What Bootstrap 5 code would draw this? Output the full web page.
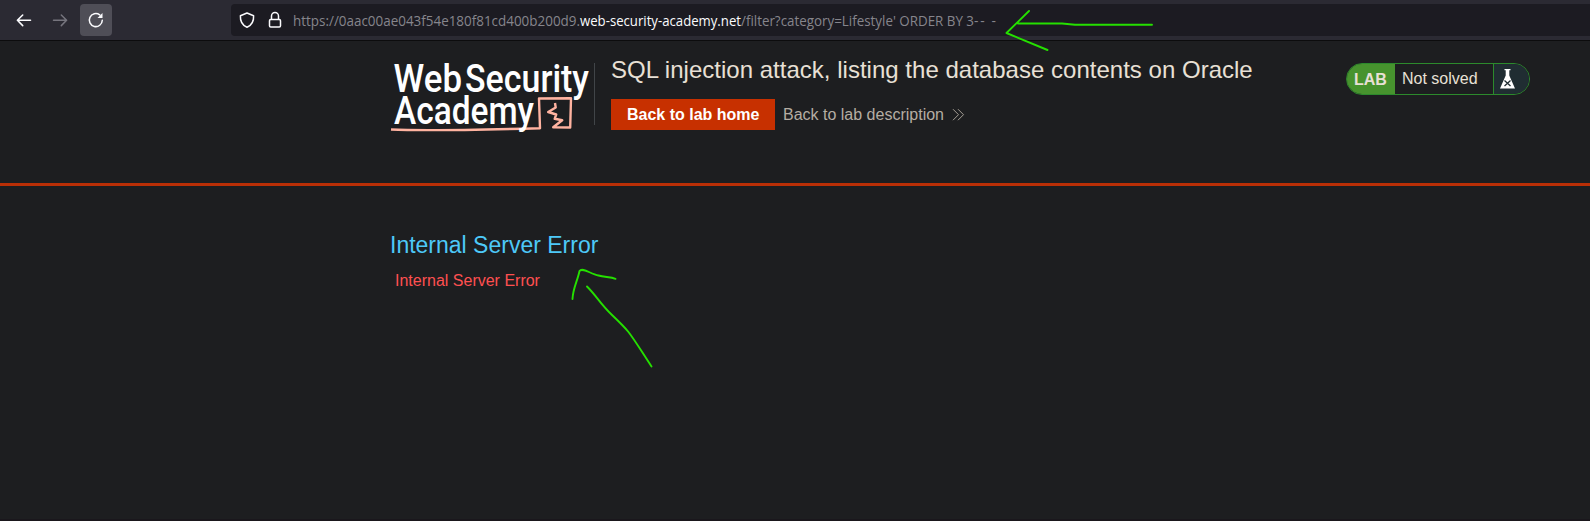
<!DOCTYPE html>
<html lang="en" data-bs-theme="dark">
<head>
<meta charset="utf-8">
<meta name="viewport" content="width=device-width, initial-scale=1">
<title>Internal Server Error</title>
<link href="https://cdn.jsdelivr.net/npm/bootstrap@5.3.0/dist/css/bootstrap.min.css" rel="stylesheet">
<style>
body{background:#1d1e20;font-family:"Liberation Sans",Arial,sans-serif;font-size:16px;height:521px;border-bottom:2px solid #1a171c;overflow:hidden}
svg{display:block;flex-shrink:0;overflow:visible}
.toolbar{height:41px;background:#2b2a33;border-bottom:1px solid #0c0c0d;padding:4px 0 4px 8px}
.tool{width:32px;height:32px;margin-right:4px;border-radius:4px}
.tool.active{background:#4f4e57}
.address{height:32px;margin-left:115px;background:#1c1b22;border-radius:4px 0 0 4px;padding-left:8px}
.lock{margin-left:12px}
.url{height:32px;width:710px;margin-left:10px}
.lab-header{height:145px;border-bottom:3px solid #b92f06;padding-left:386px;padding-top:17px}
.rule{width:1px;height:62px;margin:5px 16px 0 0;background:#414548}
.lab-title{font-size:24px;line-height:24px;letter-spacing:.015px;margin:0 0 17px;color:#e8e0d5;white-space:nowrap;font-weight:400}
.btn-lab{background:#c73000;color:#fff;border-radius:0;border:0;padding:0 16px;height:31px;line-height:31px;font-weight:700;width:164px;white-space:nowrap}
.desc{color:#b5ada3;margin-left:8px}
.status{width:184px;height:32px;margin:5px 60px 0 auto;border:1px solid #2c8a2c;border-radius:16px;overflow:hidden;color:#e8e0d5}
.status-tag{width:48px;background:#47932e;font-weight:700;padding:2px 0 0 7px}
.status-text{width:98px;padding-left:7px}
.status-icon{background:#202d32;border-left:1px solid #2c8a2c;padding-left:5px}
.message{padding:45px 0 0 390px}
.message h1{font-size:23px;line-height:28px;margin:0 0 12px;color:#4dc9f8;font-weight:400}
.message p{margin:0 0 0 5px;line-height:20px;color:#ff5050}
.marks{position:absolute;left:0;top:0;pointer-events:none}
</style>
</head>
<body>
<nav class="toolbar d-flex">
  <div class="tool d-flex align-items-center justify-content-center"><svg width="16" height="16" fill="none" stroke="#fbfbfe" stroke-width="1.6" stroke-linecap="round" stroke-linejoin="round"><path d="M14.5 8.3H1.5M6.7 3 1.4 8.3l5.3 5.3"/></svg></div>
  <div class="tool d-flex align-items-center justify-content-center"><svg width="16" height="16" fill="none" stroke="#76757e" stroke-width="1.5" stroke-linecap="round" stroke-linejoin="round"><path d="M1.5 8.3h13M9.3 3l5.3 5.3-5.3 5.3"/></svg></div>
  <div class="tool active d-flex align-items-center justify-content-center"><svg width="16" height="16" fill="none" stroke="#fbfbfe" stroke-width="1.5" stroke-linecap="round"><path d="M14.3 8.3A6.5 6.5 0 1 1 11.7 2.9"/><path d="M14.5 1v5h-5z" fill="#fbfbfe" stroke="none"/></svg></div>
  <div class="address d-flex align-items-center flex-grow-1">
    <svg width="16" height="18" fill="none" stroke="#fbfbfe" stroke-width="1.5" stroke-linejoin="round"><path d="M8 2 14.6 4.7c.3 5-1.6 9.3-6.6 11.6C3 14 1.100 9.700 1.400 4.700z"/></svg>
    <svg class="lock" width="16" height="18" fill="none" stroke="#fbfbfe" stroke-width="1.5"><rect x="2.500" y="8.500" width="11" height="7.500" rx="1.200"/><path d="M4.500 8.500V5a3.500 3.500 0 0 1 7 0v3.500"/></svg>
    <svg class="url" font-family="Open Sans,Noto Sans,sans-serif" font-size="13.8" fill="#86858c"><text x="0" y="22" textLength="287" lengthAdjust="spacingAndGlyphs">https://0aac00ae043f54e180f81cd400b200d9.</text><text x="287" y="22" fill="#fbfbfe" textLength="161" lengthAdjust="spacingAndGlyphs">web-security-academy.net</text><text x="448" y="22" textLength="233" lengthAdjust="spacingAndGlyphs">/filter?category=Lifestyle' ORDER BY 3</text><text x="681" y="22" textLength="22">-- -</text></svg>
  </div>
</nav>
<header class="lab-header d-flex align-items-start">
  <svg width="208" height="80" viewBox="386 58 208 80" font-family="Roboto,sans-serif" font-weight="500" font-size="38" fill="#fff">
    <text x="393.500" y="91.500" textLength="68.500" lengthAdjust="spacingAndGlyphs">Web</text>
    <text x="465" y="91.500" textLength="124" lengthAdjust="spacingAndGlyphs">Security</text>
    <path fill="none" stroke="#ffb3a0" stroke-width="2.400" stroke-linejoin="round" d="M391 129.500c32 1.500 84 .5 149-1.300l-1-29.700 32-.2-.8 29.200-17-.2 9-7-7.500-1.500 1.500-4.300-8-2.500 7.500-4.500-.7-4.500"/>
    <text x="394" y="123.700" textLength="140" lengthAdjust="spacingAndGlyphs">Academy</text>
  </svg>
  <div class="rule"></div>
  <div>
    <h2 class="lab-title">SQL injection attack, listing the database contents on Oracle</h2>
    <div class="d-flex align-items-center">
      <a class="btn btn-lab">Back to lab home</a>
      <a class="desc text-decoration-none">Back to lab description</a>
      <svg width="14" height="14" class="ms-2" fill="none" stroke="#a59e95" stroke-width="1"><path d="m1 1.200 5.500 5.500L1 12.200M6 1.200l5.500 5.500L6 12.200"/></svg>
    </div>
  </div>
  <div class="status d-flex align-items-stretch">
    <div class="status-tag d-flex align-items-center">LAB</div>
    <div class="status-text d-flex align-items-center">Not solved</div>
    <div class="status-icon d-flex align-items-center flex-grow-1"><svg width="17" height="22"><path fill="#fff" d="M5.500 1h6v1.200h-1.200v5.300L16 20.500H1L6.700 7.500V2.200H5.500z"/><path d="m5.500 12.500 6 5.500m0-5.500-6 5.500" stroke="#202d32" stroke-width="1.300"/></svg></div>
  </div>
</header>
<main class="message">
  <h1>Internal Server Error</h1>
  <p>Internal Server Error</p>
</main>
<svg class="marks" width="1590" height="521" fill="none" stroke="#25e000" stroke-width="1.900" stroke-linecap="round" stroke-linejoin="round">
  <path d="M1029 11l-22.500 22 41 17M1018 23.500h44l13 1.300h77"/>
  <path d="M572.500 299c.5-11 5-18 7-28 3-4 11 3 19 4.500 6 2 12 1 17 3.300M587 286.500c10 10 13 17 25 28.500 19 18 17 17 39.500 51.500"/>
</svg>
<script src="https://cdn.jsdelivr.net/npm/bootstrap@5.3.0/dist/js/bootstrap.bundle.min.js"></script>
</body>
</html>
